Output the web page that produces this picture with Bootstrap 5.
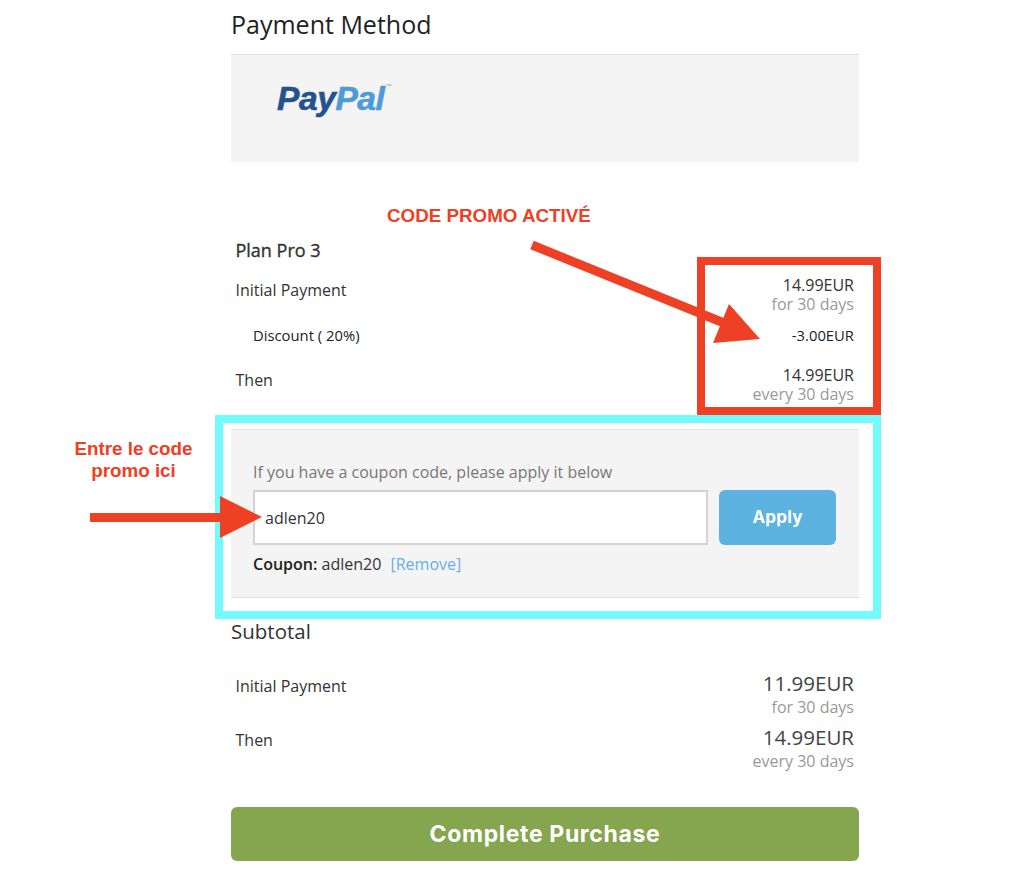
<!DOCTYPE html>
<html lang="en">
<head>
<meta charset="utf-8">
<title>Payment</title>
<link href="https://cdn.jsdelivr.net/npm/bootstrap@5.3.0/dist/css/bootstrap.min.css" rel="stylesheet">
<style>
html,body{height:882px;overflow:hidden}
body{font-family:"Open Sans",sans-serif;color:#333;background:#fff;position:relative}
.pay-col{width:628px;margin-left:231px}
.pay-title{font-size:25px;line-height:32px;color:#222;font-weight:400;margin:8px 0 0;padding-bottom:14px}
.pay-box{background:#f4f4f4;border-top:1px solid #e2e2e2;height:108px;padding:24px 46px}
.pp-logo{font-family:"Liberation Sans",sans-serif;font-weight:700;font-style:italic;font-size:33.5px;line-height:40px;letter-spacing:-.4px;color:#23528f;display:flex;align-items:flex-start;-webkit-text-stroke:.6px currentColor}
.pp-logo span{color:#4f9ad8}
.pp-logo small{font-size:6px;line-height:14px;color:#8a9db0;font-style:normal;font-weight:400;letter-spacing:0;-webkit-text-stroke:0;margin-left:1px}
.plan-name{font-size:18px;line-height:24px;font-weight:400;-webkit-text-stroke:.35px currentColor;padding:0 5px 0 4.5px;margin:76px 0 0;color:#333}
.fee-row{padding:0 5px 0 4.5px;display:flex;justify-content:space-between;align-items:flex-start;font-size:16px;line-height:20px}
.fee-label{margin-top:4px}
.fee-amt{text-align:right}
.fee-amt div{line-height:19px;color:#333}
.fee-amt .fee-note{color:#999}
.fee-first{margin-top:14px}
.fee-disc{font-size:14.8px;color:#222;padding-left:22px;margin:11px 0 21px}
.coupon-box{margin-top:25px;height:169px;background:#f4f4f4;border-top:1px solid #e2e2e2;border-bottom:1px solid #e2e2e2;padding:32px 23px 0 22px}
.coupon-hint{font-size:16px;line-height:20px;color:#777;margin-bottom:8px}
.coupon-input{height:55px;border:2px solid #d4d4d4;border-radius:0;font-size:16px;color:#333;padding-left:10px;font-family:inherit}
.coupon-btn{width:117px;height:55px;margin-left:11px;background:#5cb3e0;border:0;border-radius:6px;color:#fff;font:700 17px/1 Inter,sans-serif;letter-spacing:.2px;flex:none}
.coupon-line{font-size:16px;line-height:20px;margin-top:9px;color:#333}
.coupon-line b{font-weight:600;color:#222}
.coupon-line a{color:#66aeec;text-decoration:none;margin-left:5px}
.sub-title{font-size:20.5px;line-height:28px;color:#333;margin:19px 0 0}
.sum-row .fee-label{margin-top:5px}
.sum-row .fee-big{font-size:20.5px;line-height:24px;color:#444}
.sum-row .fee-note{line-height:22px;padding-top:1px}
.sum-first{margin-top:26px}
.sum-next{margin-top:7px}
.buy-btn{width:100%;height:54px;margin-top:35px;background:#85a64e;border:0;border-radius:6px;color:#fff;font:700 23px/1 Inter,sans-serif;letter-spacing:.65px}
.note-frame{position:absolute;border:8px solid;pointer-events:none}
.note-red{left:697px;top:257px;width:184px;height:158px;border-color:#ee4024}
.note-cyan{left:215px;top:415px;width:666px;height:204px;border-color:#72fbfd}
.note-text{position:absolute;font:700 18.8px/22px "Liberation Sans",sans-serif;color:#ee4024;text-align:center}
.note-a{left:387px;top:205px;white-space:nowrap}
.note-b{left:60px;top:438px;width:147px}
.note-arrows{position:absolute;left:0;top:0;pointer-events:none}
</style>
</head>
<body>
<main class="pay-col">
  <h2 class="pay-title">Payment Method</h2>
  <div class="pay-box"><div class="pp-logo">Pay<span>Pal</span><small>™</small></div></div>

  <h3 class="plan-name">Plan Pro 3</h3>
  <div class="fee-row fee-first"><span class="fee-label">Initial Payment</span><div class="fee-amt"><div>14.99EUR</div><div class="fee-note">for 30 days</div></div></div>
  <div class="fee-row fee-disc"><span>Discount ( 20%)</span><span>-3.00EUR</span></div>
  <div class="fee-row"><span class="fee-label">Then</span><div class="fee-amt"><div>14.99EUR</div><div class="fee-note">every 30 days</div></div></div>

  <section class="coupon-box">
    <div class="coupon-hint">If you have a coupon code, please apply it below</div>
    <div class="d-flex justify-content-between">
      <input class="form-control coupon-input" type="text" value="adlen20">
      <button class="btn coupon-btn" type="button">Apply</button>
    </div>
    <div class="coupon-line"><b>Coupon:</b> adlen20 <a href="#">[Remove]</a></div>
  </section>

  <h3 class="sub-title fw-normal">Subtotal</h3>
  <div class="fee-row sum-row sum-first"><span class="fee-label">Initial Payment</span><div class="fee-amt"><div class="fee-big">11.99EUR</div><div class="fee-note">for 30 days</div></div></div>
  <div class="fee-row sum-row sum-next"><span class="fee-label">Then</span><div class="fee-amt"><div class="fee-big">14.99EUR</div><div class="fee-note">every 30 days</div></div></div>

  <button class="btn buy-btn" type="button">Complete Purchase</button>
</main>

<div class="note-frame note-cyan"></div>
<div class="note-frame note-red"></div>
<svg class="note-arrows" width="1024" height="882" viewBox="0 0 1024 882">
  <line x1="532" y1="245" x2="724" y2="323" stroke="#ee4024" stroke-width="9"/>
  <polygon points="760,339 729,304 713,343" fill="#ee4024"/>
  <rect x="90" y="513" width="131" height="9" fill="#ee4024"/>
  <polygon points="262,517 220,496 220,538" fill="#ee4024"/>
</svg>
<div class="note-text note-a">CODE PROMO ACTIVÉ</div>
<div class="note-text note-b">Entre le code promo ici</div>
</body>
</html>
